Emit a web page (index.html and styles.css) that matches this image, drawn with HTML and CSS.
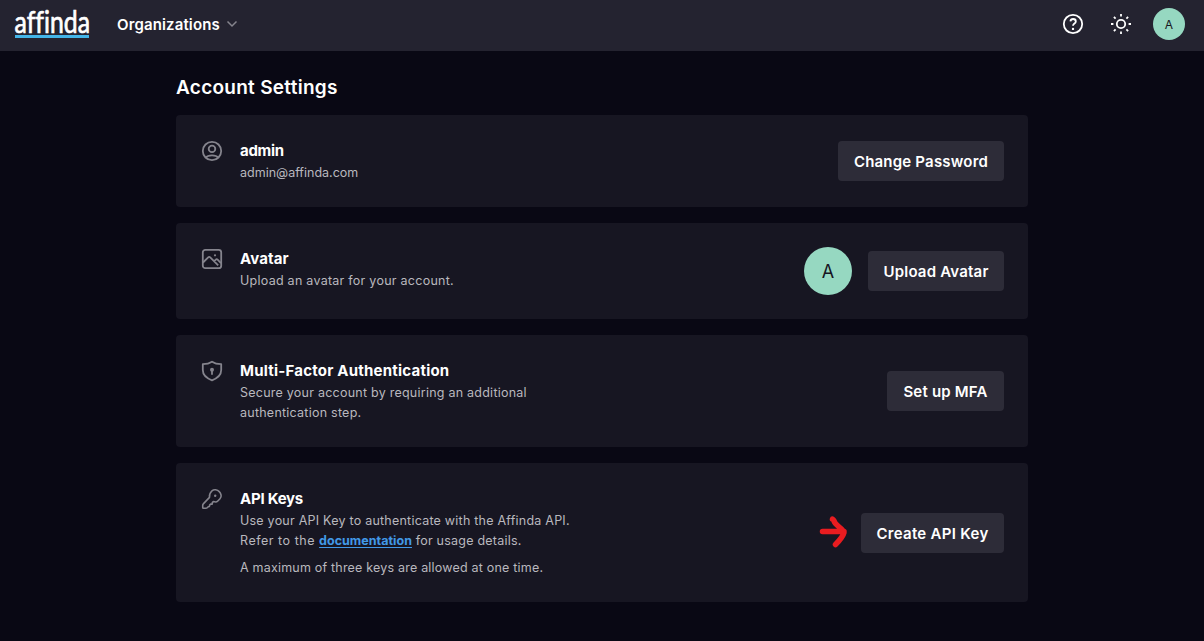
FILE: index.html
```html
<!DOCTYPE html>
<html lang="en">
<head>
<meta charset="utf-8">
<title>Account Settings</title>
<link rel="stylesheet" href="styles.css">
</head>
<body>
<header class="topbar">
  <svg class="logo" width="76" height="32" viewBox="0 0 76 32" role="img" aria-label="affinda">
    <text class="logo-text" x="0.500" y="25" textLength="75.500" lengthAdjust="spacingAndGlyphs">affinda</text>
    <rect class="logo-line" x="1" y="27" width="74" height="3"/>
  </svg>
  <nav class="nav"><span class="nav-label">Organizations</span>
    <svg class="chevron" width="12" height="8" viewBox="0 0 12 8"><path d="M1.500 1.500 6 6l4.500-4.500"/></svg>
  </nav>
  <div class="tools">
    <svg class="tool" width="24" height="24" viewBox="0 0 24 24"><circle cx="12" cy="12" r="9.200"/><path d="M9.400 9.300c.2-1.500 1.200-2.300 2.700-2.300 1.600 0 2.700 1 2.700 2.400 0 2.200-2.800 2.100-2.800 4.400"/><circle class="dot" cx="12" cy="16.900" r="1.200"/></svg>
    <svg class="tool" width="24" height="24" viewBox="0 0 24 24"><circle cx="12" cy="12" r="4.200"/><path d="M12 2v2.400M12 19.600V22M2 12h2.400M19.600 12H22M4.900 4.900l1.700 1.700M17.400 17.400l1.700 1.700M4.900 19.100l1.700-1.700M17.400 6.600l1.700-1.700"/></svg>
    <span class="avatar avatar-small">A</span>
  </div>
</header>
<main class="page">
  <h1 class="heading">Account Settings</h1>
  <section class="card">
    <svg class="icon" width="24" height="24" viewBox="0 0 24 24"><circle cx="12" cy="12" r="9.200"/><circle cx="12" cy="9.900" r="3.300"/><path d="M5.700 18.500c1.200-1.500 3.500-2.200 6.300-2.200s5.100.7 6.300 2.200"/></svg>
    <div class="info"><h2 class="title t-admin">admin</h2><p class="desc d-email">admin@affinda.com</p></div>
    <button class="button b-password">Change Password</button>
  </section>
  <section class="card">
    <svg class="icon" width="24" height="24" viewBox="0 0 24 24"><rect x="2.800" y="2.800" width="18.400" height="18.400" rx="2.500"/><path d="m3 15.500 5.200-5.200c.7-.7 1.300-.7 2 0l8 8M14.200 14.200l1.600-1.500c.6-.6 1.200-.6 1.800 0l3.400 3.400"/><circle class="dot" cx="15" cy="8.300" r="1.100"/></svg>
    <div class="info"><h2 class="title t-avatar">Avatar</h2><p class="desc d-avatar">Upload an avatar for your account.</p></div>
    <span class="avatar avatar-large">A</span>
    <button class="button b-avatar">Upload Avatar</button>
  </section>
  <section class="card">
    <svg class="icon" width="24" height="24" viewBox="0 0 24 24"><path d="M12 2.700c-2.500 1.700-5.500 2.400-9.200 2.400v6c0 4.800 3.400 8.100 9.200 10.200 5.800-2.100 9.200-5.400 9.200-10.200v-6c-3.700 0-6.700-.7-9.200-2.400Z"/><circle class="dot" cx="12" cy="10.800" r="2"/><path d="M12 11v4.700"/></svg>
    <div class="info"><h2 class="title t-mfa">Multi-Factor Authentication</h2><p class="desc d-mfa">Secure your account by requiring an additional<br>authentication step.</p></div>
    <button class="button b-mfa">Set up MFA</button>
  </section>
  <section class="card">
    <svg class="icon" width="24" height="24" viewBox="0 0 24 24"><path class="fine" d="M12 3.800c.9-.8 2.200-1.200 3.600-1 2.800.6 4.900 2.600 5.500 5.400.2 1.400-.2 2.700-1.100 3.600l-2.200 2.200c-.8.800-2 1.100-3.200.8l-1.300-.2-1 1v1.500h-1.700l-1 1-.2 1.400-1.200.2-1 1c-.4.400-.9.600-1.500.6H3.400c-.4 0-.7-.3-.7-.7v-2.200c0-.6.2-1.100.6-1.500l6.200-6.500c-.4-2.500.8-4.900 2.500-6.600Z"/><circle class="dot" cx="15.200" cy="8.800" r="1.200"/></svg>
    <div class="info"><h2 class="title t-api">API Keys</h2><p class="desc d-api">Use your API Key to authenticate with the Affinda API.<br><span class="d-refer">Refer to the </span><a class="link" href="#">documentation</a> for usage details.</p><p class="desc note">A maximum of three keys are allowed at one time.</p></div>
    <svg class="arrow" width="30" height="34" viewBox="0 0 30 34"><path d="M3.500 16.500H25M13.500 4c1.500.5 1 2 3 4.500 3 3.500 7.500 6 8.500 9-1 4-4.500 8-8.500 12"/></svg>
    <button class="button b-api">Create API Key</button>
  </section>
</main>
</body>
</html>
```
FILE: styles.css
```css
* { box-sizing: border-box; }
body { margin: 0; min-height: 641px; background: #090814; color: #fff; font-family: Inter, "Liberation Sans", sans-serif; }
h1, h2, p { margin: 0; }
.topbar { display: flex; align-items: center; height: 51px; padding: 0 19px 3px 14px; background: #242330; }
.logo { display: block; overflow: visible; margin-top: -1px; }
.logo-text { font: 400 30px Lato, sans-serif; fill: #fff; stroke: #fff; stroke-width: .7; font-variant-ligatures: none; }
.logo-line { fill: #43b5e8; }
.nav { display: flex; align-items: center; margin-left: 27px; }
.nav-label { font-size: 15px; font-weight: 600; line-height: 24px; padding-top: 1px; letter-spacing: .13px; }
.chevron { margin-left: 6px; fill: none; stroke: #85848d; stroke-width: 1.5; }
.tools { display: flex; align-items: center; margin-left: auto; gap: 24px; }
.tool { fill: none; stroke: #fff; stroke-width: 1.8; }
.tools .avatar { margin-left: -4px; }
.dot { fill: currentColor; stroke: none; }
.avatar { display: flex; align-items: center; justify-content: center; flex: none; border-radius: 50%; background: #96d8c1; color: #171622; }
.avatar-small { width: 32px; height: 32px; font-size: 12px; }
.avatar-large { width: 48px; height: 48px; font-size: 18px; margin-right: 16px; }
.page { width: 852px; margin: 0 auto; padding-top: 23px; display: flex; flex-direction: column; gap: 16px; }
.heading { font-size: 19px; line-height: 28px; font-weight: 600; margin-bottom: -3px; letter-spacing: .27px; }
.card { display: flex; align-items: center; padding: 24px; background: #171622; border-radius: 4px; }
.icon { flex: none; align-self: flex-start; margin-right: 16px; fill: none; color: #85848d; stroke: currentColor; stroke-width: 1.8; stroke-linejoin: round; }
.fine { stroke-width: 1.6; }
.info { flex: 1; align-self: flex-start; white-space: nowrap; }
.title { font-size: 15px; line-height: 24px; font-weight: 700; letter-spacing: .22px; }
.t-admin { letter-spacing: -.3px; }
.t-avatar { letter-spacing: .1px; }
.t-api { letter-spacing: -.25px; }
.desc { font-size: 12.5px; line-height: 20px; color: #b9b8be; letter-spacing: .24px; }
.d-email { letter-spacing: .01px; }
.d-avatar { letter-spacing: .26px; }
.d-api { letter-spacing: .23px; }
.d-refer { letter-spacing: .53px; }
.note { margin-top: 7px; letter-spacing: .2px; }
.link { color: #4299e8; font-weight: 700; text-decoration: underline; text-decoration-thickness: 1px; text-underline-offset: 2px; letter-spacing: .02px; }
.button { height: 40px; border: 0; border-radius: 4px; padding: 2px 0 0; background: #2d2c38; color: #fff; font: 600 15px/24px Inter, sans-serif; letter-spacing: .2px; text-align: center; white-space: nowrap; }
.b-password { width: 166px; }
.b-avatar { width: 136px; }
.b-mfa { width: 117px; }
.b-api { width: 143px; letter-spacing: .3px; }
.arrow { margin-right: 12px; margin-top: -2px; fill: none; stroke: #e91c20; stroke-width: 5.500; stroke-linecap: round; stroke-linejoin: round; }
```
